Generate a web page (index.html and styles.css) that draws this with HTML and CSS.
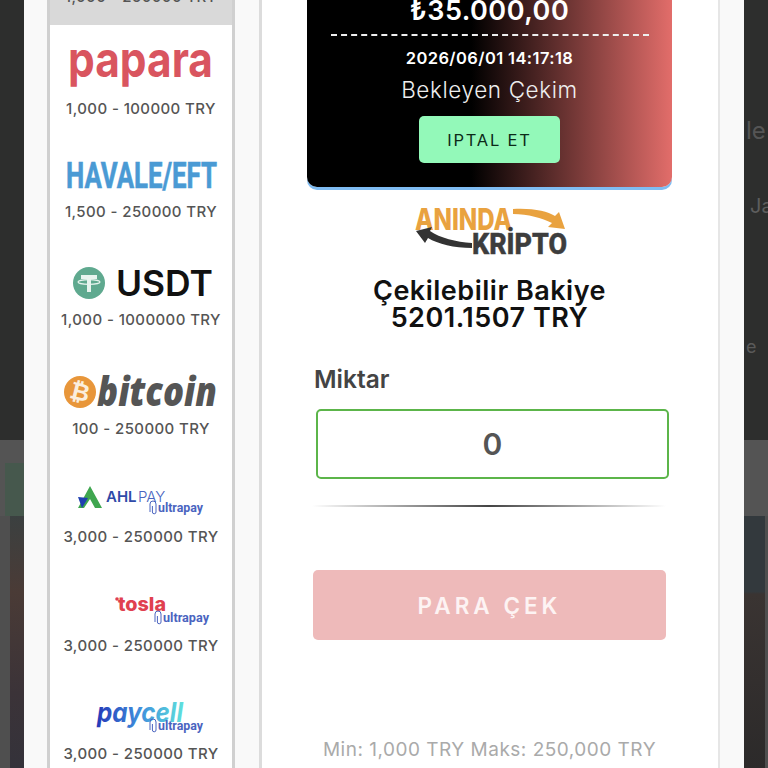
FILE: index.html
```html
<!DOCTYPE html>
<html lang="tr">
<head>
    <meta charset="UTF-8">
    <meta name="viewport" content="width=device-width, initial-scale=1.0">
    <title>Para Çek</title>
    <link rel="stylesheet" href="styles.css">
</head>
<body>
    <div class="backdrop">
        <div class="backdrop-top">
            <span class="ghost ghost-le">le</span>
            <span class="ghost ghost-ja">Ja</span>
            <span class="ghost ghost-e">e</span>
        </div>
        <div class="backdrop-strip"><div class="strip-green"></div></div>
        <div class="backdrop-games">
            <div class="game-left"></div>
            <div class="game-right"></div>
        </div>
    </div>

    <div class="modal">
        <div class="sidebar">
            <div class="method method-active">
                <div class="method-range">1,000 - 250000 TRY</div>
            </div>

            <div class="method method-papara">
                <svg class="method-logo" viewBox="0 0 182 50">
                    <text x="18" y="36" class="logo-papara" textLength="145" lengthAdjust="spacingAndGlyphs">papara</text>
                </svg>
                <div class="method-range">1,000 - 100000 TRY</div>
            </div>

            <div class="method">
                <svg class="method-logo" viewBox="0 0 182 50">
                    <text x="16" y="38" class="logo-havale" textLength="151" lengthAdjust="spacingAndGlyphs">HAVALE/EFT</text>
                </svg>
                <div class="method-range">1,500 - 250000 TRY</div>
            </div>

            <div class="method">
                <svg class="method-logo" viewBox="0 0 182 50">
                    <circle cx="39" cy="25" r="16" fill="#5fa98f"/>
                    <path d="M31 17h16v4h-6v13h-4V21h-6z" fill="#e8f4ef"/>
                    <ellipse cx="39" cy="24" rx="11" ry="2.4" fill="none" stroke="#e8f4ef" stroke-width="1.2"/>
                    <text x="66" y="38" class="logo-usdt" textLength="97" lengthAdjust="spacingAndGlyphs">USDT</text>
                </svg>
                <div class="method-range">1,000 - 1000000 TRY</div>
            </div>

            <div class="method">
                <svg class="method-logo" viewBox="0 0 182 50">
                    <circle cx="30" cy="25" r="16" fill="#e8963a"/>
                    <text x="30" y="33" class="logo-btc" transform="rotate(14 30 25)">₿</text>
                    <text x="47" y="39" class="logo-bitcoin" textLength="120" lengthAdjust="spacingAndGlyphs">bitcoin</text>
                </svg>
                <div class="method-range">100 - 250000 TRY</div>
            </div>

            <div class="method">
                <svg class="method-logo" viewBox="0 0 182 50">
                    <path d="M40 11l12 22h-7l-5-9-6 9h-6z" fill="#3fa64f"/>
                    <path d="M28 22l10 1-6 10z" fill="#1f3fb0"/>
                    <text x="56" y="27" class="logo-ahl">AHL</text>
                    <text x="88" y="27" class="logo-pay">PAY</text>
                    <path class="clip" d="M100 37v-8a3 3 0 0 1 6 0v8a1.8 1.8 0 0 1-3.6 0v-6"/>
                    <text x="108" y="37" class="logo-ultra" textLength="45" lengthAdjust="spacingAndGlyphs">ultrapay</text>
                </svg>
                <div class="method-range">3,000 - 250000 TRY</div>
            </div>

            <div class="method">
                <svg class="method-logo" viewBox="0 0 182 50">
                    <circle cx="67" cy="15" r="1.8" fill="#e0404f"/>
                    <text x="68" y="27" class="logo-tosla" textLength="48" lengthAdjust="spacingAndGlyphs">tosla</text>
                    <path class="clip" d="M105 38v-8a3 3 0 0 1 6 0v8a1.8 1.8 0 0 1-3.6 0v-6"/>
                    <text x="113" y="38" class="logo-ultra" textLength="46" lengthAdjust="spacingAndGlyphs">ultrapay</text>
                </svg>
                <div class="method-range">3,000 - 250000 TRY</div>
            </div>

            <div class="method">
                <svg class="method-logo" viewBox="0 0 182 50">
                    <defs>
                        <linearGradient id="paycellFill" x1="0" x2="1" y1="0" y2="0">
                            <stop offset="0" stop-color="#2438b8"/>
                            <stop offset="0.5" stop-color="#3f8fdc"/>
                            <stop offset="1" stop-color="#5fe0dc"/>
                        </linearGradient>
                    </defs>
                    <text x="47" y="30" class="logo-paycell" fill="url(#paycellFill)" textLength="86" lengthAdjust="spacingAndGlyphs">paycell</text>
                    <path class="clip" d="M100 38v-8a3 3 0 0 1 6 0v8a1.8 1.8 0 0 1-3.6 0v-6"/>
                    <text x="108" y="38" class="logo-ultra" textLength="45" lengthAdjust="spacingAndGlyphs">ultrapay</text>
                </svg>
                <div class="method-range">3,000 - 250000 TRY</div>
            </div>
        </div>

        <div class="main">
            <div class="pending-card">
                <div class="pending-amount">₺35.000,00</div>
                <div class="pending-line"></div>
                <div class="pending-date">2026/06/01 14:17:18</div>
                <div class="pending-status">Bekleyen Çekim</div>
                <button class="cancel-btn">IPTAL ET</button>
            </div>

            <svg class="kripto-logo" viewBox="0 0 154 50">
                <text x="1" y="24" class="logo-aninda" textLength="97" lengthAdjust="spacingAndGlyphs">ANINDA</text>
                <path d="M99 3c20-1 34 2 42 7l4-4 6 17-17-2 4-4C128 12 114 8 99 8z" fill="#e9a23f"/>
                <path d="M58 42C40 42 24 38 14 32l-3 5L2 25l16-4-2 4c10 7 26 11 42 12z" fill="#333"/>
                <text x="58" y="48" class="logo-kripto" textLength="95" lengthAdjust="spacingAndGlyphs">KRİPTO</text>
            </svg>

            <div class="balance">Çekilebilir Bakiye<br>5201.1507 TRY</div>

            <div class="amount-label">Miktar</div>
            <input class="amount-input" type="text" value="0">
            <div class="amount-divider"></div>

            <button class="withdraw-btn">PARA ÇEK</button>

            <div class="limits">Min: 1,000 TRY Maks: 250,000 TRY</div>
        </div>
    </div>
</body>
</html>
```
FILE: styles.css
```css
* {
    box-sizing: border-box;
}

html, body {
    margin: 0;
    height: 100%;
    overflow: hidden;
}

body {
    position: relative;
    background: #2c2c2c;
    font-family: Inter, 'Noto Sans', sans-serif;
}

/* blurred page behind the modal */
.backdrop {
    display: flex;
    flex-direction: column;
    height: 768px;
}

.backdrop-top {
    position: relative;
    height: 440px;
    background: #2d2e2d;
}

.ghost {
    position: absolute;
    left: 746px;
    font-size: 24px;
    color: #555;
}

.ghost-le { top: 116px; }
.ghost-ja { top: 194px; color: #5e5e5e; font-size: 20px; left: 750px; }
.ghost-e { top: 336px; color: #5a5a5a; font-size: 18px; }

.backdrop-strip {
    height: 76px;
    padding: 23px 0 0 5px;
    background: #545454;
}

.strip-green {
    width: 19px;
    height: 53px;
    background: #46584d;
}

.backdrop-games {
    flex: 1;
    display: flex;
    justify-content: space-between;
    background: #4f4f4f;
}

.game-left {
    width: 24px;
    margin-left: 10px;
    background: linear-gradient(180deg, #3b4040 0%, #4a3b36 30%, #3b3338 70%, #34323a 100%);
}

.game-right {
    width: 21px;
    margin-right: 3px;
    background: linear-gradient(180deg, #33393d 0%, #33393d 30%, #3a3432 31%, #2c2a2a 100%);
}

/* modal */
.modal {
    position: absolute;
    top: 0;
    left: 24px;
    width: 720px;
    height: 768px;
    display: flex;
    align-items: flex-start;
    padding-left: 23px;
    overflow: hidden;
    background: #f9f9f9;
}

.sidebar {
    flex: none;
    width: 188px;
    height: 800px;
    margin-top: -11px;
    background: #fff;
    border-left: 3px solid #d0d0d0;
    border-right: 3px solid #d0d0d0;
}

.method {
    height: 108.4px;
    padding-top: 22px;
}

.method-active {
    height: 36px;
    padding-top: 0;
    background: #d9d9d9;
}

.method-papara {
    height: 103px;
    padding-top: 16px;
}

.method-papara .method-logo {
    margin-bottom: 10px;
}

.method-logo {
    display: block;
    width: 182px;
    height: 50px;
    margin-bottom: 4px;
}

.method-range {
    font-size: 15px;
    font-weight: 500;
    line-height: 16px;
    letter-spacing: 0.4px;
    text-align: center;
    white-space: nowrap;
    color: #555;
}

.logo-papara {
    font: 700 50px Inter, sans-serif;
    fill: #d9555f;
}

.logo-havale {
    font: 700 36px Roboto, sans-serif;
    fill: #4a9ad4;
    stroke: #4a9ad4;
    stroke-width: 0.6px;
}

.logo-usdt {
    font: 600 35px Inter, sans-serif;
    fill: #111;
}

.logo-btc {
    font: 700 24px 'DejaVu Sans', sans-serif;
    text-anchor: middle;
    fill: #fbeedd;
}

.logo-bitcoin {
    font: italic 800 40px 'Open Sans', sans-serif;
    fill: #555;
}

.logo-ahl {
    font: 600 15px Inter, sans-serif;
    fill: #2f4aa8;
}

.logo-pay {
    font: 300 15px Inter, sans-serif;
    fill: #4a64c0;
}

.logo-ultra {
    font: 700 12px Roboto, sans-serif;
    fill: #4a64c0;
}

.clip {
    fill: none;
    stroke: #4a64c0;
    stroke-width: 1;
}

.logo-tosla {
    font: 800 19px Inter, sans-serif;
    fill: #e0404f;
}

.logo-paycell {
    font: italic 700 27px Inter, sans-serif;
}

.main {
    flex: none;
    width: 461px;
    height: 800px;
    margin-left: 24px;
    padding: 0 46px 0 45px;
    background: #fff;
    border-left: 3px solid #dcdcdc;
    border-right: 2px solid #e6e6e6;
}

.pending-card {
    display: flex;
    flex-direction: column;
    align-items: center;
    height: 207px;
    margin-top: -20px;
    padding-top: 16px;
    color: #fff;
    border-radius: 0 0 10px 10px;
    background: linear-gradient(90deg, #000 45%, #e26d6a 100%);
    box-shadow: 0 3px 0 #7fbcf2;
}

.pending-amount {
    font-size: 27px;
    font-weight: 600;
    line-height: 30px;
    letter-spacing: 0.5px;
}

.pending-line {
    width: 318px;
    margin-top: 8px;
    border-top: 2px dashed #eee;
}

.pending-date {
    margin-top: 12px;
    font-size: 16.5px;
    font-weight: 600;
    line-height: 20px;
    letter-spacing: 0.4px;
}

.pending-status {
    margin-top: 8px;
    font-size: 22.5px;
    font-weight: 300;
    line-height: 28px;
    letter-spacing: 0.6px;
    color: #eee;
}

.cancel-btn {
    width: 141px;
    height: 47px;
    margin-top: 12px;
    border: none;
    border-radius: 5px;
    background: #93f9b9;
    color: #0c2a18;
    font-family: inherit;
    font-size: 16.5px;
    font-weight: 400;
    letter-spacing: 1.8px;
}

.kripto-logo {
    display: block;
    width: 154px;
    height: 50px;
    margin: 19px 0 0 107px;
}

.logo-aninda {
    font: 800 30px Inter, sans-serif;
    fill: #e9a23f;
}

.logo-kripto {
    font: 800 29px Roboto, sans-serif;
    fill: #3d3d3d;
    stroke: #3d3d3d;
    stroke-width: 0.5px;
}

.balance {
    margin-top: 21px;
    text-align: center;
    font-size: 27px;
    font-weight: 600;
    line-height: 27px;
    letter-spacing: 0.5px;
    color: #111;
}

.amount-label {
    margin: 34px 0 0 7px;
    font-size: 24.5px;
    font-weight: 600;
    line-height: 28px;
    color: #444;
}

.amount-input {
    display: block;
    width: 353px;
    height: 70px;
    margin: 16px 0 0 9px;
    border: 2.5px solid #5cb54a;
    border-radius: 5px;
    background: #fff;
    text-align: center;
    font-family: inherit;
    font-size: 30px;
    font-weight: 600;
    color: #555;
}

.amount-divider {
    width: 354px;
    height: 2px;
    margin: 26px 0 0 5px;
    background: linear-gradient(90deg, #fff 0%, #444 50%, #fff 100%);
}

.withdraw-btn {
    display: block;
    width: 353px;
    height: 70px;
    margin: 63px 0 0 6px;
    border: none;
    border-radius: 5px;
    background: #eebaba;
    color: #fdf3f3;
    font-family: inherit;
    font-size: 22.5px;
    font-weight: 600;
    letter-spacing: 4px;
}

.limits {
    margin-top: 99px;
    text-align: center;
    font-size: 19px;
    line-height: 22px;
    letter-spacing: 0.5px;
    white-space: nowrap;
    color: #aaa;
}
```
